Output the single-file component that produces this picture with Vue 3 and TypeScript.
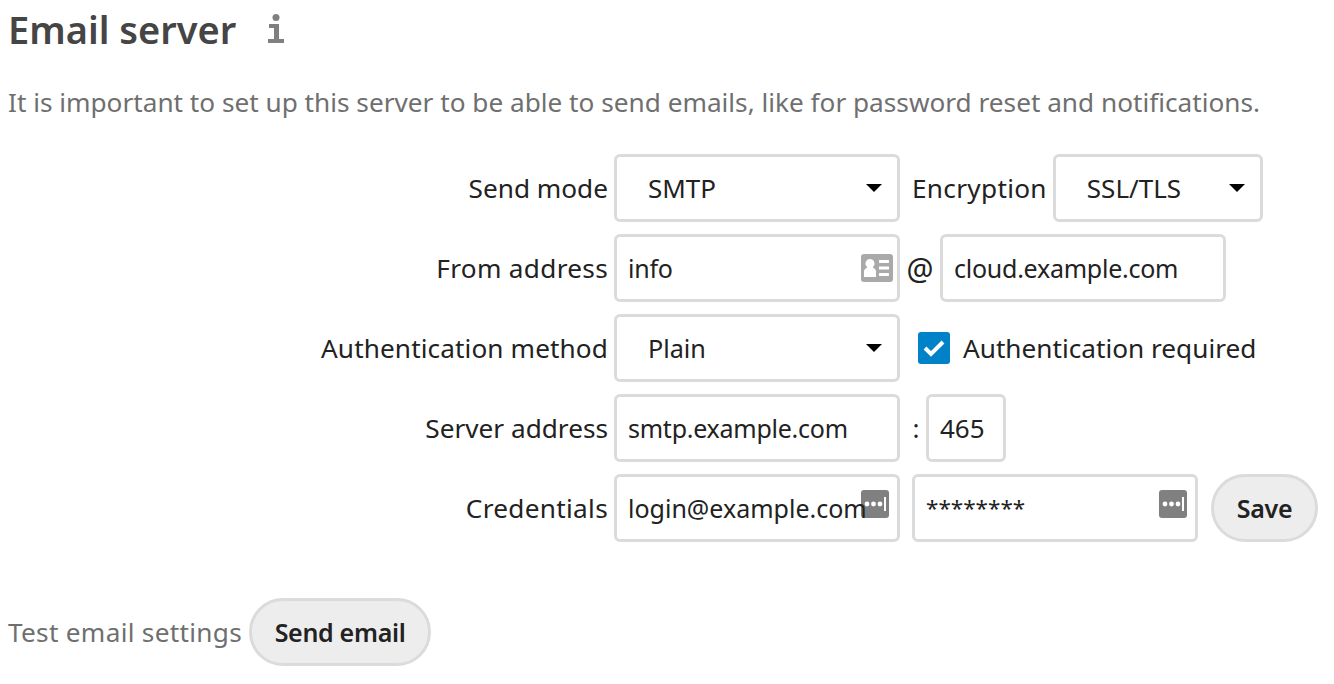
<script setup lang="ts">
const sendModes: string[] = ['SMTP', 'Sendmail']
</script>

<template>
  <main class="page">
    <header class="heading">
      <h2>Email server</h2>
      <svg class="info" width="32" height="32" viewBox="0 0 32 32" aria-hidden="true">
        <circle cx="16" cy="4.500" r="3.500" fill="#808080" />
        <path d="M9 11h10v15h5v4H8v-4h6V15H9z" fill="#808080" />
      </svg>
    </header>
    <p class="intro">It is important to set up this server to be able to send emails, like for password reset and notifications.</p>

    <form class="form" @submit.prevent>
      <div class="row">
        <label class="label">Send mode</label>
        <div class="select wide">
          <select class="select-el">
            <option v-for="m in sendModes" :key="m">{{ m }}</option>
          </select>
          <span class="caret"></span>
        </div>
        <label class="label-inline enc">Encryption</label>
        <div class="select narrow">
          <select class="select-el"><option>SSL/TLS</option></select>
          <span class="caret"></span>
        </div>
      </div>

      <div class="row">
        <label class="label roomy">From address</label>
        <div class="field wide">
          <svg class="field-icon card" width="32" height="28" viewBox="0 0 32 28" aria-hidden="true">
            <path fill="#a9a9a9" fill-rule="evenodd" d="M3 0h26a3 3 0 0 1 3 3v22a3 3 0 0 1-3 3H3a3 3 0 0 1-3-3V3a3 3 0 0 1 3-3zM9 5a4.500 4.500 0 0 0-3 7.850c0 1-.5 1.500-1.500 2C3.500 15.500 3 16.500 3 18v5h12v-5c0-1.500-.5-2.500-1.500-3.150-1-.5-1.500-1-1.500-2A4.500 4.500 0 0 0 9 5zM18 6v3h10V6zM18 12.500v3h10v-3zM18 19v3h10v-3z" />
          </svg>
          <input class="input" value="info" />
        </div>
        <span class="sep at">@</span>
        <div class="field wide"><input class="input" value="cloud.example.com" /></div>
      </div>

      <div class="row">
        <label class="label slight">Authentication method</label>
        <div class="select wide">
          <select class="select-el plain"><option>Plain</option></select>
          <span class="caret"></span>
        </div>
        <label class="check">
          <span class="box">
            <svg width="22" height="18" viewBox="0 0 22 18" aria-hidden="true">
              <path d="M2 9l6 6L20 3" fill="none" stroke="#fff" stroke-width="4" />
            </svg>
          </span>
          <span>Authentication required</span>
        </label>
      </div>

      <div class="row">
        <label class="label">Server address</label>
        <div class="field wide"><input class="input" value="smtp.example.com" /></div>
        <span class="sep colon">:</span>
        <div class="field port"><input class="input digits" value="465" /></div>
      </div>

      <div class="row">
        <label class="label roomy">Credentials</label>
        <div class="field wide">
          <svg class="field-icon pass" width="28" height="28" viewBox="0 0 28 28" aria-hidden="true">
            <rect width="28" height="28" rx="3" fill="#808080" />
            <circle cx="6" cy="14" r="2.400" fill="#fff" />
            <circle cx="12.500" cy="14" r="2.400" fill="#fff" />
            <circle cx="19" cy="14" r="2.400" fill="#fff" />
            <rect x="23" y="7" width="2" height="14" fill="#fff" />
          </svg>
          <input class="input login" value="login@example.com" />
        </div>
        <div class="field wide pw">
          <svg class="field-icon pass" width="28" height="28" viewBox="0 0 28 28" aria-hidden="true">
            <rect width="28" height="28" rx="3" fill="#808080" />
            <circle cx="6" cy="14" r="2.400" fill="#fff" />
            <circle cx="12.500" cy="14" r="2.400" fill="#fff" />
            <circle cx="19" cy="14" r="2.400" fill="#fff" />
            <rect x="23" y="7" width="2" height="14" fill="#fff" />
          </svg>
          <input class="input stars" value="********" />
        </div>
        <button class="btn save" type="button">Save</button>
      </div>
    </form>

    <div class="test">
      <span class="test-label">Test email settings</span>
      <button class="btn send" type="button">Send email</button>
    </div>
  </main>
</template>

<style>
html, body { margin: 0; background: #fff; }
</style>

<style scoped>
.page {
  width: 1334px;
  height: 684px;
  overflow: hidden;
  box-sizing: border-box;
  padding: 0 0 0 8px;
  font-family: "Noto Sans", sans-serif;
  font-size: 26.200px;
  color: #222;
}
.heading { display: flex; align-items: flex-start; height: 60px; }
h2 {
  margin: 6px 0 0;
  font-size: 38px;
  line-height: 46px;
  font-weight: 600;
  color: #454545;
}
.info { margin: 13px 0 0 24px; }
.intro {
  margin: 23px 0 0;
  line-height: 38px;
  color: #6f6f6f;
  white-space: nowrap;
}
.form {
  display: flex;
  flex-direction: column;
  gap: 12px;
  margin-top: 33px;
}
.row { display: flex; align-items: center; height: 68px; }
.label {
  width: 600px;
  margin-right: 6px;
  text-align: right;
  white-space: nowrap;
}
.roomy { letter-spacing: 0.3px; }
.slight { letter-spacing: 0.1px; }
.field, .select { position: relative; height: 68px; box-sizing: border-box; flex: none; background: #fff; }
.wide { width: 286px; }
.narrow { width: 210px; }
.port { width: 80px; }
.input, .select-el {
  position: relative;
  width: 100%;
  height: 100%;
  box-sizing: border-box;
  border: 3px solid #dbdbdb;
  border-radius: 6px;
  background: transparent;
  font: inherit;
  color: #222;
  margin: 0;
  outline: none;
}
.input {
  padding: 0 6px 0 11px;
  font-size: 25px;
  letter-spacing: -0.25px;
}
.login { letter-spacing: 0; }
.digits { font-size: 26px; letter-spacing: 0; }
.select-el { appearance: none; padding: 0 0 0 31px; font-size: 26px; }
.select-el.plain { font-size: 25.200px; }
.caret {
  position: absolute;
  right: 18px;
  top: 30px;
  border-left: 8px solid transparent;
  border-right: 8px solid transparent;
  border-top: 8px solid #000;
  pointer-events: none;
}
.label-inline { white-space: nowrap; }
.enc { margin: 0 6px 0 12px; letter-spacing: 0.3px; }
.sep { text-align: center; flex: none; }
.at { width: 40px; font-size: 30px; }
.colon { width: 26px; box-sizing: border-box; padding-left: 6px; }
.field-icon { position: absolute; top: 20px; right: 7px; }
.field-icon.pass { right: 11px; top: 16px; }
.pw { margin-left: 12px; }
.stars { padding-bottom: 2px; font-size: 22.500px; letter-spacing: 0; }
.check { display: flex; align-items: center; margin-left: 18px; white-space: nowrap; }
.box {
  width: 32px;
  height: 32px;
  margin-right: 13px;
  border-radius: 3px;
  background: #0082c9;
  display: flex;
  align-items: center;
  justify-content: center;
}
.btn {
  height: 68px;
  box-sizing: border-box;
  border: 3px solid #dbdbdb;
  border-radius: 34px;
  background: #ededed;
  font: inherit;
  font-size: 25px;
  letter-spacing: -0.3px;
  font-weight: 600;
  color: #222;
  padding: 0;
  flex: none;
}
.save { width: 107px; margin-left: 13px; }
.send { width: 182px; margin-left: 7px; }
.test { display: flex; align-items: center; margin-top: 56px; }
.test-label { color: #6f6f6f; white-space: nowrap; letter-spacing: 0.3px; }
</style>
